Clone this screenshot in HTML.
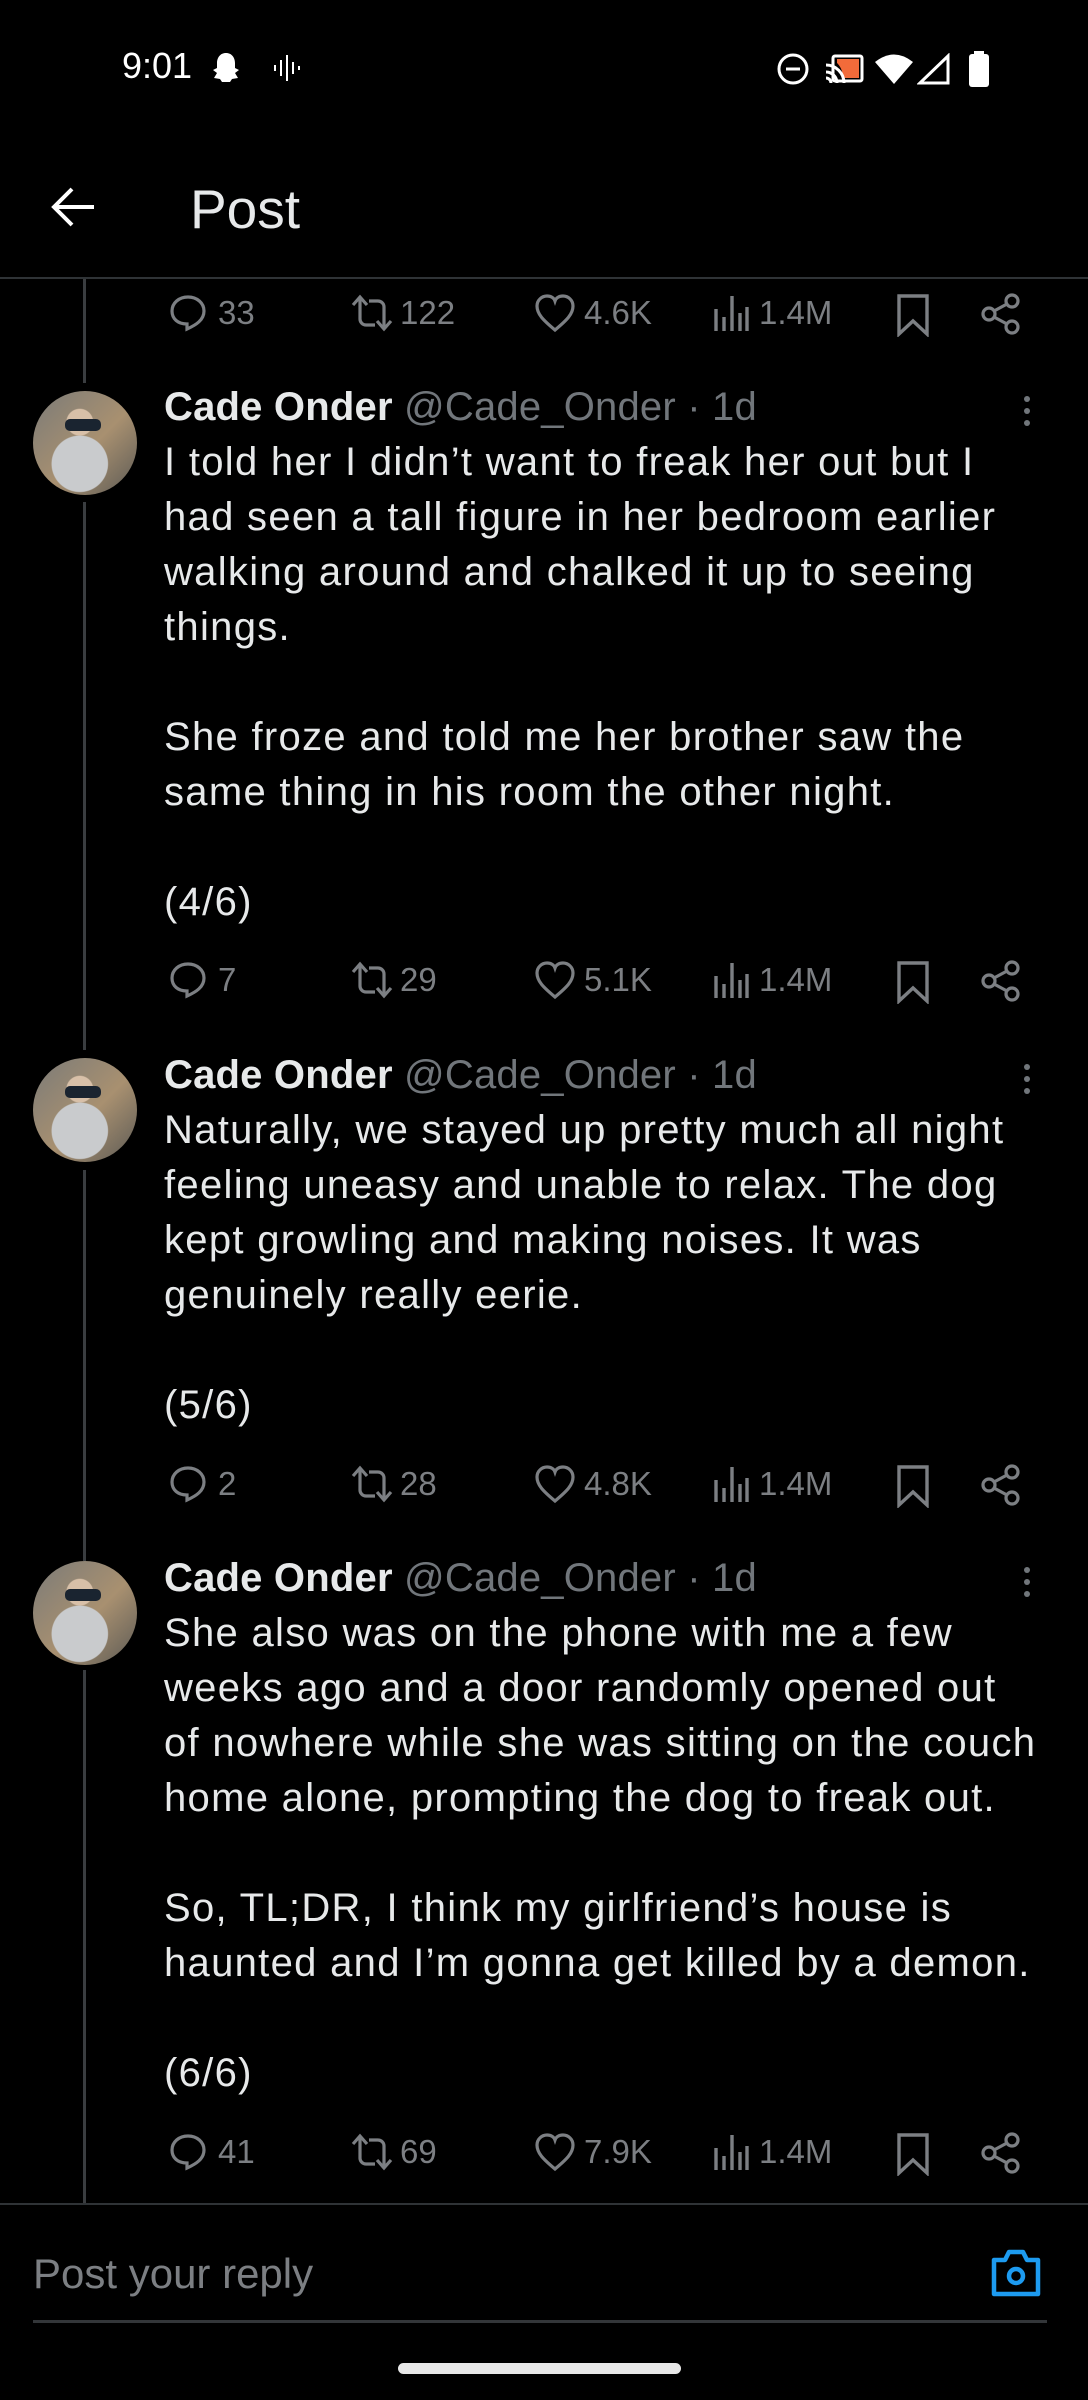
<!DOCTYPE html>
<html><head><meta charset="utf-8"><style>
*{margin:0;padding:0;box-sizing:border-box}
body{width:1088px;height:2400px;background:#000;position:relative;overflow:hidden;font-family:"Liberation Sans",sans-serif;color:#e7e9ea}
.abs{position:absolute}
.line{position:absolute;left:0;right:0;height:3px;background:#2f3336}
.thread{position:absolute;left:83px;width:3px;background:#3a3d40}
.av{position:absolute;left:33px;width:104px;height:104px;border-radius:50%;overflow:hidden;background:radial-gradient(circle at 45% 70%,#c9cbcd 0 30%,transparent 31%),radial-gradient(circle at 45% 30%,#d8c0a8 0 14%,transparent 15%),linear-gradient(135deg,#7b7b78,#a89070 55%,#5c5a55)}
.av:after{content:"";position:absolute;left:32px;top:28px;width:36px;height:12px;background:#1a2430;border-radius:5px}
.name{position:absolute;left:164px;font-size:40px;line-height:55px;white-space:nowrap;letter-spacing:0.2px}
.name b{color:#e7e9ea}
.name span{color:#71767b}
.txt{position:absolute;left:164px;font-size:40px;line-height:55px;white-space:pre;color:#e7e9ea;letter-spacing:1.3px}
.dots{position:absolute;left:1024px;width:6px}
.dots i{display:block;width:6px;height:6px;border-radius:50%;background:#71767b;margin-bottom:6px}
.row{position:absolute;left:0;width:1088px;height:44px;color:#7c7f83;font-size:33px}
.row svg{position:absolute;top:3px}
.row .n{position:absolute;top:5px;line-height:36px}
</style></head><body>

<div class="abs" style="left:122px;top:46px;font-size:36px;color:#fff;line-height:40px">9:01</div>
<svg class="abs" style="left:211px;top:51px" width="30" height="34" viewBox="0 0 30 34"><path d="M15 2c6 0 9 5 9 10v5l4 2-4 3 3 5-6 1-2 3h-8l-2-3-6-1 3-5-4-3 4-2v-5c0-5 3-10 9-10z" fill="#fff"/></svg>
<svg class="abs" style="left:272px;top:53px" width="30" height="30" viewBox="0 0 30 30" stroke="#fff" stroke-width="2"><path d="M3 12v6M9 7v16M15 2v26M21 9v12M27 13v4"/></svg>
<svg class="abs" style="left:776px;top:52px" width="34" height="34" viewBox="0 0 34 34"><circle cx="17" cy="17" r="14" fill="none" stroke="#fff" stroke-width="3"/><path d="M10 17h14" stroke="#fff" stroke-width="3"/></svg>
<svg class="abs" style="left:825px;top:53px" width="40" height="32" viewBox="0 0 40 32"><rect x="8" y="3" width="29" height="25" rx="2" fill="none" stroke="#fff" stroke-width="3"/><path d="M12 6h22v19H18C18 15 12 10 12 10z" fill="#f26b3a"/><path d="M1 12a18 18 0 0 1 18 18M1 19a11 11 0 0 1 11 11M1 25a5 5 0 0 1 5 5" stroke="#fff" stroke-width="3" fill="none"/></svg>
<svg class="abs" style="left:874px;top:53px" width="40" height="32" viewBox="0 0 40 32"><path d="M1 9Q20-6 39 9L20 31z" fill="#fff"/></svg>
<svg class="abs" style="left:917px;top:53px" width="34" height="32" viewBox="0 0 34 32"><path d="M31 3V30H3z" fill="none" stroke="#fff" stroke-width="3"/></svg>
<svg class="abs" style="left:968px;top:51px" width="22" height="36" viewBox="0 0 22 36"><rect x="6" y="0" width="10" height="4" fill="#fff"/><rect x="1" y="3" width="20" height="33" rx="3" fill="#fff"/></svg>

<svg class="abs" style="left:50px;top:186px" width="46" height="42" viewBox="0 0 46 42"><path d="M44 21H5M22 3L4 21l18 18" stroke="#fff" stroke-width="4" fill="none"/></svg>
<div class="abs" style="left:190px;top:178px;font-size:55px;line-height:62px;color:#e7e9ea">Post</div>
<div class="line" style="top:277px;height:2px"></div>

<div class="thread" style="top:279px;height:104px"></div>
<div class="thread" style="top:502px;height:548px"></div>
<div class="thread" style="top:1170px;height:391px"></div>
<div class="thread" style="top:1670px;height:534px"></div>

<div class="row" style="top:290px">
<svg style="left:168px" width="40" height="40" viewBox="0 0 40 40" fill="none" stroke="#7c7f83" stroke-width="3.2"><path d="M20 4C29 4 36 10 36 18c0 9-8 14-17 18v-5C10 31 4 26 4 18 4 10 11 4 20 4z"/></svg><span class="n" style="left:218px">33</span>
<svg style="left:350px" width="44" height="40" viewBox="0 0 44 40" fill="none" stroke="#7c7f83" stroke-width="3.2"><path d="M3 12l7-8 7 8M10 4v22a6 6 0 0 0 6 6h9M41 28l-7 8-7-8M34 36V14a6 6 0 0 0-6-6h-9"/></svg><span class="n" style="left:400px">122</span>
<svg style="left:534px" width="42" height="40" viewBox="0 0 42 40" fill="none" stroke="#7c7f83" stroke-width="3.2"><path d="M21 37C9 27 3 21 3 13 3 7 8 3 13 3c4 0 7 2 8 5 1-3 4-5 8-5 5 0 10 4 10 10 0 8-6 14-18 24z"/></svg><span class="n" style="left:584px">4.6K</span>
<svg style="left:712px" width="38" height="40" viewBox="0 0 38 40" stroke="#7c7f83" stroke-width="3.4"><path d="M4 16v22M12 24v14M20 3v35M28 20v18M35 14v24"/></svg><span class="n" style="left:759px">1.4M</span>
<svg style="left:894px" width="38" height="44" viewBox="0 0 38 44" fill="none" stroke="#7c7f83" stroke-width="3.4"><path d="M5 3h28v38L19 28 5 41z"/></svg>
<svg style="left:980px" width="42" height="42" viewBox="0 0 42 42" fill="none" stroke="#7c7f83" stroke-width="3.2"><circle cx="32" cy="8" r="6"/><circle cx="9" cy="21" r="6"/><circle cx="32" cy="34" r="6"/><path d="M14 18l13-7M14 24l13 7"/></svg>
</div>

<div class="av" style="top:391px"></div>
<div class="name" style="top:380px"><b>Cade Onder</b> <span>@Cade_Onder · 1d</span></div>
<div class="dots" style="top:396px"><i></i><i></i><i></i></div>
<div class="txt" style="top:435px">I told her I didn’t want to freak her out but I
had seen a tall figure in her bedroom earlier
walking around and chalked it up to seeing
things.

She froze and told me her brother saw the
same thing in his room the other night.

(4/6)</div>
<div class="row" style="top:957px">
<svg style="left:168px" width="40" height="40" viewBox="0 0 40 40" fill="none" stroke="#7c7f83" stroke-width="3.2"><path d="M20 4C29 4 36 10 36 18c0 9-8 14-17 18v-5C10 31 4 26 4 18 4 10 11 4 20 4z"/></svg><span class="n" style="left:218px">7</span>
<svg style="left:350px" width="44" height="40" viewBox="0 0 44 40" fill="none" stroke="#7c7f83" stroke-width="3.2"><path d="M3 12l7-8 7 8M10 4v22a6 6 0 0 0 6 6h9M41 28l-7 8-7-8M34 36V14a6 6 0 0 0-6-6h-9"/></svg><span class="n" style="left:400px">29</span>
<svg style="left:534px" width="42" height="40" viewBox="0 0 42 40" fill="none" stroke="#7c7f83" stroke-width="3.2"><path d="M21 37C9 27 3 21 3 13 3 7 8 3 13 3c4 0 7 2 8 5 1-3 4-5 8-5 5 0 10 4 10 10 0 8-6 14-18 24z"/></svg><span class="n" style="left:584px">5.1K</span>
<svg style="left:712px" width="38" height="40" viewBox="0 0 38 40" stroke="#7c7f83" stroke-width="3.4"><path d="M4 16v22M12 24v14M20 3v35M28 20v18M35 14v24"/></svg><span class="n" style="left:759px">1.4M</span>
<svg style="left:894px" width="38" height="44" viewBox="0 0 38 44" fill="none" stroke="#7c7f83" stroke-width="3.4"><path d="M5 3h28v38L19 28 5 41z"/></svg>
<svg style="left:980px" width="42" height="42" viewBox="0 0 42 42" fill="none" stroke="#7c7f83" stroke-width="3.2"><circle cx="32" cy="8" r="6"/><circle cx="9" cy="21" r="6"/><circle cx="32" cy="34" r="6"/><path d="M14 18l13-7M14 24l13 7"/></svg>
</div>

<div class="av" style="top:1058px"></div>
<div class="name" style="top:1048px"><b>Cade Onder</b> <span>@Cade_Onder · 1d</span></div>
<div class="dots" style="top:1064px"><i></i><i></i><i></i></div>
<div class="txt" style="top:1103px">Naturally, we stayed up pretty much all night
feeling uneasy and unable to relax. The dog
kept growling and making noises. It was
genuinely really eerie.

(5/6)</div>
<div class="row" style="top:1461px">
<svg style="left:168px" width="40" height="40" viewBox="0 0 40 40" fill="none" stroke="#7c7f83" stroke-width="3.2"><path d="M20 4C29 4 36 10 36 18c0 9-8 14-17 18v-5C10 31 4 26 4 18 4 10 11 4 20 4z"/></svg><span class="n" style="left:218px">2</span>
<svg style="left:350px" width="44" height="40" viewBox="0 0 44 40" fill="none" stroke="#7c7f83" stroke-width="3.2"><path d="M3 12l7-8 7 8M10 4v22a6 6 0 0 0 6 6h9M41 28l-7 8-7-8M34 36V14a6 6 0 0 0-6-6h-9"/></svg><span class="n" style="left:400px">28</span>
<svg style="left:534px" width="42" height="40" viewBox="0 0 42 40" fill="none" stroke="#7c7f83" stroke-width="3.2"><path d="M21 37C9 27 3 21 3 13 3 7 8 3 13 3c4 0 7 2 8 5 1-3 4-5 8-5 5 0 10 4 10 10 0 8-6 14-18 24z"/></svg><span class="n" style="left:584px">4.8K</span>
<svg style="left:712px" width="38" height="40" viewBox="0 0 38 40" stroke="#7c7f83" stroke-width="3.4"><path d="M4 16v22M12 24v14M20 3v35M28 20v18M35 14v24"/></svg><span class="n" style="left:759px">1.4M</span>
<svg style="left:894px" width="38" height="44" viewBox="0 0 38 44" fill="none" stroke="#7c7f83" stroke-width="3.4"><path d="M5 3h28v38L19 28 5 41z"/></svg>
<svg style="left:980px" width="42" height="42" viewBox="0 0 42 42" fill="none" stroke="#7c7f83" stroke-width="3.2"><circle cx="32" cy="8" r="6"/><circle cx="9" cy="21" r="6"/><circle cx="32" cy="34" r="6"/><path d="M14 18l13-7M14 24l13 7"/></svg>
</div>

<div class="av" style="top:1561px"></div>
<div class="name" style="top:1551px"><b>Cade Onder</b> <span>@Cade_Onder · 1d</span></div>
<div class="dots" style="top:1567px"><i></i><i></i><i></i></div>
<div class="txt" style="top:1606px">She also was on the phone with me a few
weeks ago and a door randomly opened out
of nowhere while she was sitting on the couch
home alone, prompting the dog to freak out.

So, TL;DR, I think my girlfriend’s house is
haunted and I’m gonna get killed by a demon.

(6/6)</div>
<div class="row" style="top:2129px">
<svg style="left:168px" width="40" height="40" viewBox="0 0 40 40" fill="none" stroke="#7c7f83" stroke-width="3.2"><path d="M20 4C29 4 36 10 36 18c0 9-8 14-17 18v-5C10 31 4 26 4 18 4 10 11 4 20 4z"/></svg><span class="n" style="left:218px">41</span>
<svg style="left:350px" width="44" height="40" viewBox="0 0 44 40" fill="none" stroke="#7c7f83" stroke-width="3.2"><path d="M3 12l7-8 7 8M10 4v22a6 6 0 0 0 6 6h9M41 28l-7 8-7-8M34 36V14a6 6 0 0 0-6-6h-9"/></svg><span class="n" style="left:400px">69</span>
<svg style="left:534px" width="42" height="40" viewBox="0 0 42 40" fill="none" stroke="#7c7f83" stroke-width="3.2"><path d="M21 37C9 27 3 21 3 13 3 7 8 3 13 3c4 0 7 2 8 5 1-3 4-5 8-5 5 0 10 4 10 10 0 8-6 14-18 24z"/></svg><span class="n" style="left:584px">7.9K</span>
<svg style="left:712px" width="38" height="40" viewBox="0 0 38 40" stroke="#7c7f83" stroke-width="3.4"><path d="M4 16v22M12 24v14M20 3v35M28 20v18M35 14v24"/></svg><span class="n" style="left:759px">1.4M</span>
<svg style="left:894px" width="38" height="44" viewBox="0 0 38 44" fill="none" stroke="#7c7f83" stroke-width="3.4"><path d="M5 3h28v38L19 28 5 41z"/></svg>
<svg style="left:980px" width="42" height="42" viewBox="0 0 42 42" fill="none" stroke="#7c7f83" stroke-width="3.2"><circle cx="32" cy="8" r="6"/><circle cx="9" cy="21" r="6"/><circle cx="32" cy="34" r="6"/><path d="M14 18l13-7M14 24l13 7"/></svg>
</div>

<div class="line" style="top:2203px;height:2px"></div>

<div class="abs" style="left:33px;top:2250px;font-size:42px;line-height:48px;color:#7c7f83">Post your reply</div>
<svg class="abs" style="left:990px;top:2248px" width="52" height="50" viewBox="0 0 52 50" fill="none" stroke="#1d9bf0" stroke-width="4.5"><path d="M4 12h11l4-8h14l4 8h11v34H4z" stroke-linejoin="round"/><circle cx="26" cy="28" r="7"/></svg>
<div class="abs" style="left:33px;top:2320px;width:1014px;height:3px;background:#333639"></div>

<div class="abs" style="left:398px;top:2363px;width:283px;height:11px;border-radius:6px;background:#e8e8e8"></div>
</body></html>
